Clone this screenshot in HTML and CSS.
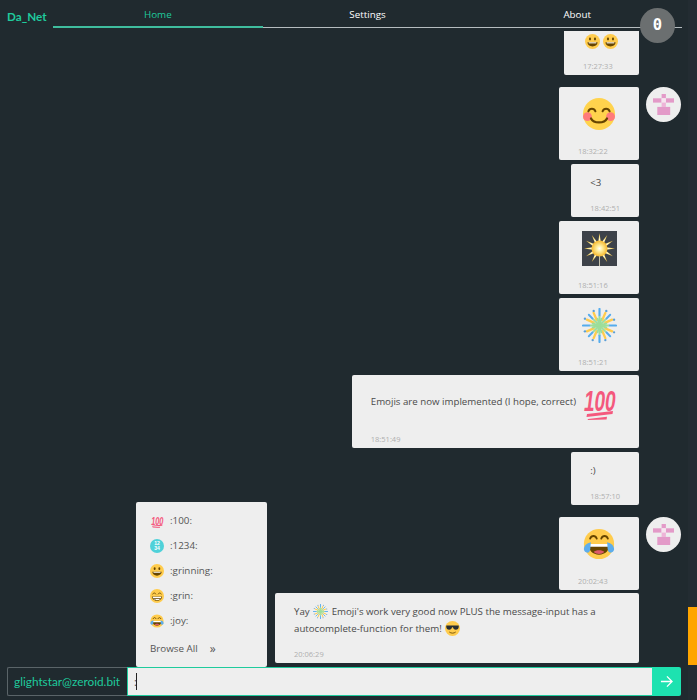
FILE: index.html
```html
<!DOCTYPE html>
<html lang="en">
<head>
  <meta charset="UTF-8">
  <title>Da_Net</title>
  <link rel="stylesheet" href="styles.css">
</head>
<body>
  <svg class="sprites" width="0" height="0">
    <defs>
      <radialGradient id="starGlow">
        <stop offset="0" stop-color="#ffffff"/>
        <stop offset="0.35" stop-color="#fff0a0"/>
        <stop offset="1" stop-color="#f5b82e"/>
      </radialGradient>
      <g id="fwQuarter" fill="none" stroke-linecap="round">
        <line x1="0" y1="-10" x2="0" y2="-17" stroke="#55acee" stroke-width="2.200"/>
        <line x1="7" y1="-7" x2="11" y2="-11" stroke="#55acee" stroke-width="2"/>
        <line x1="3" y1="-6" x2="6" y2="-13" stroke="#ffcc4d" stroke-width="2.400"/>
        <line x1="6" y1="-3" x2="13" y2="-6" stroke="#ffcc4d" stroke-width="2.400"/>
        <line x1="0" y1="0" x2="2" y2="-7" stroke="#9ede9a" stroke-width="2"/>
        <line x1="0" y1="0" x2="7" y2="-2" stroke="#9ede9a" stroke-width="2"/>
        <line x1="0" y1="0" x2="0" y2="-9" stroke="#9ede9a" stroke-width="2"/>
        <line x1="0" y1="0" x2="6" y2="-6" stroke="#9ede9a" stroke-width="2"/>
        <circle cx="7" cy="-15" r="1.200" fill="#5c9fd6"/>
        <circle cx="15" cy="-6" r="1.200" fill="#5c9fd6"/>
      </g>
      <polygon id="starRay" points="-2.200,0 0,-15.500 2.200,0"/>
      <path id="hundredBars" d="M6 30l26-3-.5 3-26 3zM7 35l19-2.200-.4 2.600-19 .6z" fill="#f4587d"/>
    </defs>
    <symbol id="e-smile" viewBox="0 0 36 36">
      <circle cx="18" cy="18" r="18" fill="#ffd34d"/>
      <circle cx="5" cy="21" r="5" fill="#ff7b7b"/>
      <circle cx="31" cy="21" r="5" fill="#ff7b7b"/>
      <path d="M6 15c1.500-4 6.500-4 8 0M22 15c1.500-4 6.500-4 8 0" fill="none" stroke="#664500" stroke-width="2.200" stroke-linecap="round"/>
      <path d="M9 23c3 6 15 6 18 0" fill="none" stroke="#664500" stroke-width="2.600" stroke-linecap="round"/>
    </symbol>
    <symbol id="e-grinning" viewBox="0 0 36 36">
      <circle cx="18" cy="18" r="18" fill="#ffcc4d"/>
      <ellipse cx="12" cy="12" rx="2.500" ry="3.500" fill="#664500"/>
      <ellipse cx="24" cy="12" rx="2.500" ry="3.500" fill="#664500"/>
      <path d="M6 20c0 6 5.500 10 12 10s12-4 12-10z" fill="#664500"/>
      <path d="M9 20h18v2.500H9z" fill="#fff"/>
    </symbol>
    <symbol id="e-grin" viewBox="0 0 36 36">
      <circle cx="18" cy="18" r="18" fill="#ffcc4d"/>
      <path d="M7 13c1.500-4 6.500-4 8 0M21 13c1.500-4 6.500-4 8 0" fill="none" stroke="#664500" stroke-width="2" stroke-linecap="round"/>
      <path d="M5 19h26c0 6-6 11-13 11S5 25 5 19z" fill="#664500"/>
      <path d="M7 20h22c0 2-.5 3-1 4H8c-.5-1-1-2-1-4zM10 26h16c-2 2-5 3-8 3s-6-1-8-3z" fill="#fff"/>
    </symbol>
    <symbol id="e-joy" viewBox="0 0 36 36">
      <circle cx="18" cy="18" r="17" fill="#ffcc4d"/>
      <path d="M8 12c1.500-4 6-4 7.500 0M20.500 12c1.500-4 6-4 7.500 0" fill="none" stroke="#664500" stroke-width="2" stroke-linecap="round"/>
      <path d="M6 18h24c0 7-5 12-12 12S6 25 6 18z" fill="#664500"/>
      <path d="M7 18h22l-.5 3h-21z" fill="#fff"/>
      <path d="M12 27c2-2.500 10-2.500 12 0-3 3-9 3-12 0z" fill="#dd5a6a"/>
      <path d="M1 24c0-4 3-7 8-8-1 5 0 8-2 11-2 2-6 0-6-3zM35 24c0-4-3-7-8-8 1 5 0 8 2 11 2 2 6 0 6-3z" fill="#5dadec"/>
    </symbol>
    <symbol id="e-cool" viewBox="0 0 36 36">
      <circle cx="18" cy="18" r="18" fill="#ffcc4d"/>
      <path d="M3 11h30v3c0 5-3 7-7 7s-6-2-7-6h-2c-1 4-3 6-7 6s-7-2-7-7z" fill="#292f33"/>
      <path d="M11 27c4 3 10 3 14 0" fill="none" stroke="#664500" stroke-width="2" stroke-linecap="round"/>
    </symbol>
    <symbol id="e-star" viewBox="-17.500 -17.500 35 35">
      <rect x="-17.500" y="-17.500" width="35" height="35" fill="#3d4249"/>
      <rect x="-.4" y="0" width=".8" height="17.500" fill="#e9e2c4"/>
      <g fill="url(#starGlow)">
        <use href="#starRay"/>
        <use href="#starRay" transform="rotate(30)"/>
        <use href="#starRay" transform="rotate(60)"/>
        <use href="#starRay" transform="rotate(90)"/>
        <use href="#starRay" transform="rotate(120)"/>
        <use href="#starRay" transform="rotate(150)"/>
        <use href="#starRay" transform="rotate(210)"/>
        <use href="#starRay" transform="rotate(240)"/>
        <use href="#starRay" transform="rotate(270)"/>
        <use href="#starRay" transform="rotate(300)"/>
        <use href="#starRay" transform="rotate(330)"/>
      </g>
      <circle r="8" fill="url(#starGlow)"/>
    </symbol>
    <symbol id="e-fireworks" viewBox="-18 -18 36 36">
      <use href="#fwQuarter"/>
      <use href="#fwQuarter" transform="rotate(90)"/>
      <use href="#fwQuarter" transform="rotate(180)"/>
      <use href="#fwQuarter" transform="rotate(270)"/>
    </symbol>
    <symbol id="identicon" viewBox="0 0 21.500 21.500">
      <rect x="8.600" y="0" width="4.300" height="4.300" fill="#e39ac8"/>
      <rect x="0" y="4.300" width="8.600" height="4.300" fill="#e39ac8"/>
      <rect x="12.900" y="4.300" width="8.600" height="4.300" fill="#e39ac8"/>
      <rect x="8.600" y="4.300" width="4.300" height="4.300" fill="#f7e3ef"/>
      <rect x="8.600" y="8.600" width="4.300" height="4.300" fill="#eeb4d8"/>
      <rect x="4.300" y="12.900" width="12.900" height="8.600" fill="#e39ac8"/>
    </symbol>
  </svg>

  <div class="page">
    <div class="main">
      <nav class="topbar">
        <span class="brand">Da_Net</span>
        <div class="tabs">
          <a class="tab tab-active">Home</a>
          <a class="tab">Settings</a>
          <a class="tab">About</a>
        </div>
      </nav>
      <div class="badge">0</div>

      <div class="chat">
        <div class="row">
          <div class="msg">
            <div class="msg-body">
              <svg class="emoji-sm"><use href="#e-grinning"/></svg>
              <svg class="emoji-sm"><use href="#e-grinning"/></svg>
            </div>
            <div class="msg-time">17:27:33</div>
          </div>
          <div class="avatar-slot"></div>
        </div>

        <div class="row row-new">
          <div class="msg">
            <div class="msg-body msg-body-big"><svg class="emoji-lg"><use href="#e-smile"/></svg></div>
            <div class="msg-time">18:32:22</div>
          </div>
          <div class="avatar-slot"><div class="avatar"><svg class="identicon"><use href="#identicon"/></svg></div></div>
        </div>

        <div class="row">
          <div class="msg">
            <div class="msg-body">&lt;3</div>
            <div class="msg-time">18:42:51</div>
          </div>
          <div class="avatar-slot"></div>
        </div>

        <div class="row">
          <div class="msg">
            <div class="msg-body msg-body-big"><svg class="emoji-lg emoji-wide"><use href="#e-star"/></svg></div>
            <div class="msg-time">18:51:16</div>
          </div>
          <div class="avatar-slot"></div>
        </div>

        <div class="row">
          <div class="msg">
            <div class="msg-body msg-body-big"><svg class="emoji-lg emoji-wide"><use href="#e-fireworks"/></svg></div>
            <div class="msg-time">18:51:21</div>
          </div>
          <div class="avatar-slot"></div>
        </div>

        <div class="row">
          <div class="msg">
            <div class="msg-body msg-body-big">Emojis are now implemented (I hope, correct)
              <svg class="emoji-hundred" viewBox="0 0 36 36"><text class="hundred" transform="translate(3 27) scale(1 1.6)">100</text><use href="#hundredBars"/></svg>
            </div>
            <div class="msg-time">18:51:49</div>
          </div>
          <div class="avatar-slot"></div>
        </div>

        <div class="row">
          <div class="msg">
            <div class="msg-body">:)</div>
            <div class="msg-time">18:57:10</div>
          </div>
          <div class="avatar-slot"></div>
        </div>

        <div class="row row-new">
          <div class="msg">
            <div class="msg-body msg-body-big"><svg class="emoji-lg"><use href="#e-joy"/></svg></div>
            <div class="msg-time">20:02:43</div>
          </div>
          <div class="avatar-slot"><div class="avatar"><svg class="identicon"><use href="#identicon"/></svg></div></div>
        </div>

        <div class="row row-close">
          <div class="msg msg-long">
            <div class="msg-body msg-body-text">Yay <svg class="emoji-inline"><use href="#e-fireworks"/></svg> Emoji's work very good now PLUS the message-input has a<br>autocomplete-function for them! <svg class="emoji-inline"><use href="#e-cool"/></svg></div>
            <div class="msg-time">20:06:29</div>
          </div>
          <div class="avatar-slot"></div>
        </div>
      </div>

      <div class="inputbar">
        <div class="menu">
          <div class="menu-item"><svg class="emoji-menu" viewBox="0 0 36 36"><text class="hundred" transform="translate(3 27) scale(1 1.6)">100</text><use href="#hundredBars"/></svg>:100:</div>
          <div class="menu-item"><svg class="emoji-menu" viewBox="0 0 36 36"><circle cx="18" cy="18" r="18" fill="#4fd1d9"/><text class="digits" x="18" y="16" text-anchor="middle">12</text><text class="digits" x="18" y="29" text-anchor="middle">34</text></svg>:1234:</div>
          <div class="menu-item"><svg class="emoji-menu"><use href="#e-grinning"/></svg>:grinning:</div>
          <div class="menu-item"><svg class="emoji-menu"><use href="#e-grin"/></svg>:grin:</div>
          <div class="menu-item"><svg class="emoji-menu"><use href="#e-joy"/></svg>:joy:</div>
          <div class="menu-all"><span>Browse All</span><span class="menu-arrows">»</span></div>
        </div>
        <div class="username">glightstar@zeroid.bit</div>
        <div class="input"><span class="input-text">:</span><span class="caret"></span></div>
        <button class="send">
          <svg class="send-icon" viewBox="0 0 14 14"><path d="M1 7h12M7.500 1.500 13 7l-5.500 5.500" fill="none" stroke="#fff" stroke-width="1.400"/></svg>
        </button>
      </div>
    </div>
    <div class="scrollbar"><div class="scrollbar-thumb"></div></div>
  </div>
</body>
</html>
```

FILE: styles.css
```css
html, body {
  height: 100%;
  margin: 0;
  overflow: hidden;
}
body {
  font-family: "Open Sans", "Liberation Sans", sans-serif;
  background: #202a2f;
  color: #4a4a4a;
}
.sprites {
  display: block;
  height: 0;
}
.hundred {
  font-family: "Liberation Sans", sans-serif;
  font-size: 19px;
  font-weight: bold;
  font-style: italic;
  fill: #f4587d;
}
.digits {
  font-family: "Liberation Sans", sans-serif;
  font-size: 13px;
  font-weight: bold;
  fill: #fff;
}
.page {
  display: flex;
  height: 700px;
}
.main {
  position: relative;
  flex: 1;
  min-width: 0;
  display: flex;
  flex-direction: column;
}

/* top bar */
.topbar {
  display: flex;
  height: 28px;
  flex-shrink: 0;
  padding: 0 6px 0 7px;
}
.brand {
  width: 46px;
  padding-top: 9px;
  font-family: Lato, sans-serif;
  font-size: 11.7px;
  font-weight: bold;
  color: #1fcb9d;
}
.tabs {
  flex: 1;
  display: flex;
  border-bottom: 1px solid #b5bcbf;
}
.tab {
  flex: 1;
  text-align: center;
  padding-top: 8px;
  font-size: 9.8px;
  color: #fff;
}
.tab-active {
  color: #1fcb9d;
  box-shadow: 0 1px 0 #3fbd9e;
  border-bottom: 1px solid #3fbd9e;
}
.badge {
  position: absolute;
  top: 8px;
  left: 640px;
  width: 35px;
  height: 35px;
  border-radius: 50%;
  background: #6b6f70;
  color: #fff;
  font-family: "DejaVu Sans Mono", monospace;
  font-size: 15.5px;
  font-weight: bold;
  line-height: 35px;
  text-align: center;
}

/* messages */
.chat {
  flex: 1;
  min-height: 0;
  margin-top: 3px;
  padding-bottom: 4px;
  overflow: hidden;
  display: flex;
  flex-direction: column;
  justify-content: flex-end;
}
.row {
  display: flex;
  justify-content: flex-end;
  flex-shrink: 0;
  margin-top: 4px;
  padding-right: 7px;
}
.row-new {
  margin-top: 12px;
}
.row-close {
  margin-top: 3px;
}
.avatar-slot {
  width: 35px;
  margin-left: 7px;
}
.avatar {
  width: 35px;
  height: 35px;
  border-radius: 50%;
  background: #eee;
  display: flex;
  align-items: center;
  justify-content: center;
}
.identicon {
  width: 21.5px;
  height: 21.5px;
}
.msg {
  background: #eee;
  border-radius: 2px;
  padding: 9px 19px 3px;
}
.msg-long {
  width: 364px;
  box-sizing: border-box;
}
.msg-body {
  min-height: 20px;
  line-height: 20px;
  font-size: 9.7px;
  white-space: nowrap;
  display: flex;
  align-items: center;
}
.msg-body-big {
  height: 40px;
  box-sizing: border-box;
  padding-bottom: 4px;
}
.msg-body-text {
  display: block;
  min-height: 0;
  padding: 2px 0;
  line-height: 16.5px;
}
.msg-time {
  margin-top: 9px;
  height: 12px;
  line-height: 12px;
  font-size: 7.5px;
  color: #aeaeae;
}
.emoji-sm {
  width: 15px;
  height: 15px;
  margin: 0 1.75px;
}
.emoji-lg {
  width: 32px;
  height: 32px;
  margin: 0 5px;
}
.emoji-wide {
  width: 35px;
  height: 35px;
  margin: 0 3.5px;
}
.emoji-hundred {
  width: 36px;
  height: 36px;
  margin: 0 3px 0 5px;
}
.emoji-inline {
  width: 15px;
  height: 15px;
  vertical-align: -4px;
  margin: 0 1px;
}

/* input */
.inputbar {
  position: relative;
  display: flex;
  height: 29px;
  margin: 0 0 4px;
  padding: 0 7px;
  flex-shrink: 0;
}
.username {
  width: 120px;
  box-sizing: border-box;
  border: 1px solid #5a6468;
  border-right: none;
  border-radius: 2px 0 0 2px;
  font-family: Lato, sans-serif;
  font-size: 11.8px;
  line-height: 27px;
  padding-left: 6px;
  color: #1fcb9d;
  white-space: nowrap;
}
.input {
  flex: 1;
  display: flex;
  align-items: center;
  padding-left: 6px;
  background: #eee;
  border-top: 1px solid #1fcb9d;
  border-bottom: 1px solid #1fcb9d;
  border-left: 1px solid #1fcb9d;
  font-size: 11px;
}
.caret {
  width: 1px;
  height: 17px;
  margin-left: -1px;
  background: #222;
}
.send {
  width: 29px;
  padding: 0;
  border: none;
  border-radius: 0 2px 2px 0;
  background: #1de2b0;
  display: flex;
  align-items: center;
  justify-content: center;
}
.send-icon {
  width: 13px;
  height: 13px;
}

/* autocomplete menu */
.menu {
  position: absolute;
  left: 136px;
  bottom: 100%;
  width: 131px;
  height: 165px;
  box-sizing: border-box;
  padding: 6px 14px 0;
  background: #eee;
  border-radius: 2px;
  font-size: 9.8px;
  color: #555;
  z-index: 2;
}
.menu-item {
  display: flex;
  align-items: center;
  height: 25px;
}
.emoji-menu {
  width: 14px;
  height: 14px;
  margin-right: 6px;
}
.menu-all {
  display: flex;
  align-items: center;
  margin-top: 5px;
  height: 20px;
}
.menu-arrows {
  margin-left: 12px;
  font-size: 12px;
}

/* scrollbar */
.scrollbar {
  width: 9px;
  flex-shrink: 0;
  background: #232c32;
}
.scrollbar-thumb {
  margin-top: 607px;
  height: 58px;
  background: #ffa500;
}
```
